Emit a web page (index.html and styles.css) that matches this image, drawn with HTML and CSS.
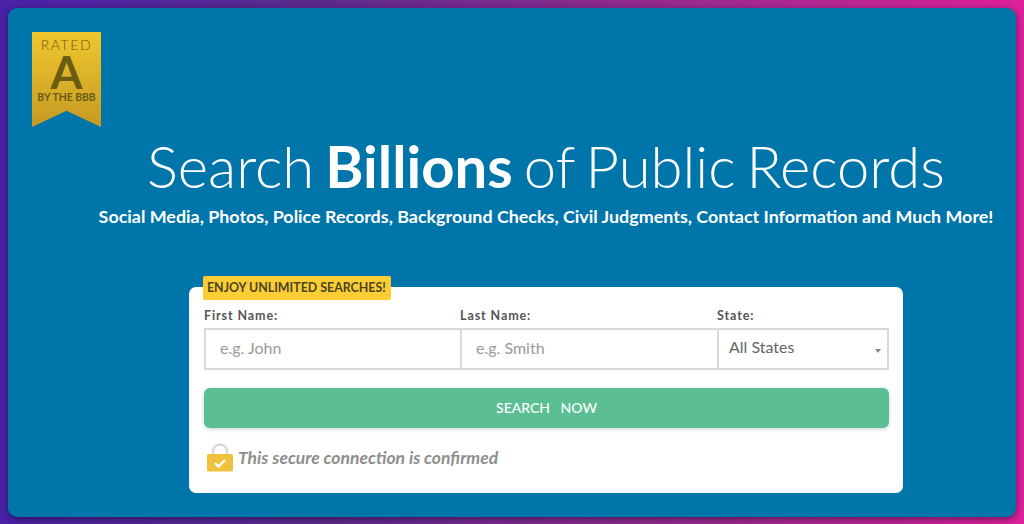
FILE: index.html
```html
<!DOCTYPE html>
<html lang="en">
<head>
<meta charset="utf-8">
<title>Search Billions of Public Records</title>
<link rel="stylesheet" href="styles.css">
</head>
<body>
<main class="panel">
  <div class="badge">
    <span class="badge-rated">RATED</span>
    <span class="badge-grade">A</span>
    <span class="badge-by">BY THE BBB</span>
  </div>
  <section class="hero">
    <h1 class="title">Search <strong>Billions</strong> of Public Records</h1>
    <p class="subtitle">Social Media, Photos, Police Records, Background Checks, Civil Judgments, Contact Information and Much More!</p>
    <form class="card">
      <div class="ribbon">ENJOY UNLIMITED SEARCHES!</div>
      <div class="fields">
        <div class="field field-first">
          <label class="label">First Name:</label>
          <div class="control">e.g. John</div>
        </div>
        <div class="field field-last">
          <label class="label">Last Name:</label>
          <div class="control">e.g. Smith</div>
        </div>
        <div class="field field-state">
          <label class="label">State:</label>
          <div class="control control-select"><span>All States</span><i class="caret"></i></div>
        </div>
      </div>
      <div class="submit">SEARCH&nbsp;&nbsp; NOW</div>
      <div class="secure">
        <svg class="lock" width="28" height="31" viewBox="0 0 28 31" aria-hidden="true">
          <path d="M7 15V10.500C7 5.500 10 2.500 14 2.500S21 5.500 21 10.500V15" fill="none" stroke="#d8d8d8" stroke-width="2.600"/>
          <rect x="1" y="12" width="26" height="17.500" rx="1.500" fill="#f0c13c"/>
          <path d="M9 21l3.500 3.500L19 18" fill="none" stroke="#fff" stroke-width="2.400"/>
        </svg>
        <span>This secure connection is confirmed</span>
      </div>
    </form>
  </section>
</main>
</body>
</html>
```
FILE: styles.css
```css
* { box-sizing: border-box; }
html, body { height: 100%; }
body {
  margin: 0;
  padding: 8px 8px 7px;
  overflow: hidden;
  font-family: Lato, "Liberation Sans", sans-serif;
  background: linear-gradient(90deg, #4a22a8 0%, #5b2a8e 30%, #a02a90 70%, #e0209a 100%);
}
.panel {
  position: relative;
  height: 509px;
  padding: 126px 0 0 68px;
  background: #0075a9;
  border-radius: 9px;
  box-shadow: 0 2px 7px rgba(20, 10, 40, .6);
}
.badge {
  position: absolute;
  left: 24px;
  top: 24px;
  width: 69px;
  height: 95px;
  display: flex;
  flex-direction: column;
  align-items: center;
  background: linear-gradient(180deg, #f0c72e 0%, #c59a22 100%);
  clip-path: polygon(0 0, 100% 0, 100% 100%, 50% 83%, 0 100%);
  color: #6b5c14;
}
.badge-rated { margin-top: 5px; font-size: 14px; line-height: 15px; font-weight: 300; letter-spacing: 1.600px; }
.badge-grade { margin-top: 1px; font-size: 46px; line-height: 38px; font-weight: 700; }
.badge-by { font-size: 10.400px; line-height: 12px; font-weight: 700; }
.hero { display: flex; flex-direction: column; align-items: center; }
.title {
  margin: 0;
  font-size: 58px;
  line-height: 64px;
  font-weight: 300;
  word-spacing: -4.700px;
  color: #fff;
  white-space: nowrap;
}
.title strong { font-weight: 700; }
.subtitle {
  margin: 7px 0 0;
  font-size: 17.900px;
  line-height: 22px;
  font-weight: 700;
  color: #fff;
  white-space: nowrap;
}
.card {
  position: relative;
  width: 714px;
  height: 206px;
  margin-top: 60px;
  padding: 20px 14px 0 15px;
  background: #fff;
  border-radius: 7px;
}
.ribbon {
  position: absolute;
  left: 14px;
  top: -11px;
  width: 188px;
  height: 24px;
  padding-left: 4px;
  background: #fdcd35;
  border-radius: 2px;
  font-size: 12.400px;
  line-height: 24px;
  font-weight: 700;
  color: #4a4420;
  white-space: nowrap;
}
.fields { display: flex; }
.field-first { width: 256px; }
.field-last { width: 257px; }
.field-state { width: 172px; }
.label {
  display: block;
  height: 21px;
  font-size: 12.500px;
  line-height: 17px;
  font-weight: 700;
  letter-spacing: .9px;
  color: #555;
}
.control {
  height: 42px;
  padding-left: 14px;
  border: 2px solid #d8d8d8;
  border-right: 0;
  font-size: 16px;
  line-height: 35px;
  color: #9a9a9a;
  background: #fff;
}
.control-select {
  position: relative;
  padding-left: 10px;
  border-right: 2px solid #d8d8d8;
  color: #666;
  line-height: 33px;
}
.caret {
  position: absolute;
  right: 6px;
  top: 19px;
  border: 3px solid transparent;
  border-top: 4px solid #888;
  border-bottom: 0;
}
.submit {
  height: 40px;
  margin-top: 18px;
  background: #5bbf93;
  border-radius: 6px;
  box-shadow: 0 1px 4px rgba(0, 0, 0, .2);
  text-align: center;
  font-size: 14px;
  line-height: 40px;
  font-weight: 500;
  color: #fff;
}
.secure {
  display: flex;
  align-items: center;
  gap: 4px;
  margin: 14px 0 0 2px;
  font-size: 17.500px;
  font-style: italic;
  font-weight: 700;
  color: #8e8e8e;
}
.lock { flex: none; }
```
